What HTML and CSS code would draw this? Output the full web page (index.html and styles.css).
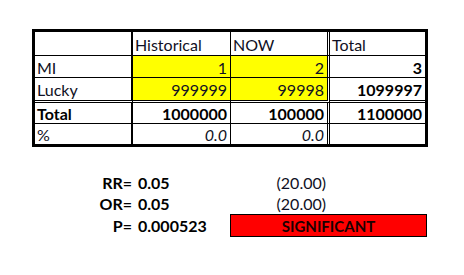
FILE: index.html
```html
<!DOCTYPE html>
<html>
<head>
<meta charset="utf-8">
<link rel="stylesheet" href="styles.css">
</head>
<body>
<div class="page">
  <div class="sheet">
    <div class="c c1 rh"></div>
    <div class="c c2 rh">Historical</div>
    <div class="c c3 rh">NOW</div>
    <div class="c c4 rh">Total</div>

    <div class="c c1 rm">MI</div>
    <div class="c c2 rm num yel">1</div>
    <div class="c c3 rm num yel">2</div>
    <div class="c c4 rm num b">3</div>

    <div class="c c1 rl">Lucky</div>
    <div class="c c2 rl num yel">999999</div>
    <div class="c c3 rl num yel">99998</div>
    <div class="c c4 rl num b">1099997</div>

    <div class="c c1 rt b">Total</div>
    <div class="c c2 rt num b">1000000</div>
    <div class="c c3 rt num b">100000</div>
    <div class="c c4 rt num b">1100000</div>

    <div class="c c1 rp">%</div>
    <div class="c c2 rp num i">0.0</div>
    <div class="c c3 rp num i">0.0</div>
    <div class="c c4 rp"></div>
  </div>

  <div class="stats">
    <div class="s lbl b">RR=</div>
    <div class="s val b">0.05</div>
    <div class="s num">(20.00)</div>
    <div class="s"></div>

    <div class="s lbl b">OR=</div>
    <div class="s val b">0.05</div>
    <div class="s num">(20.00)</div>
    <div class="s"></div>

    <div class="s lbl b">P=</div>
    <div class="s val b">0.000523</div>
    <div class="sig">SIGNIFICANT</div>
  </div>
</div>
</body>
</html>
```
FILE: styles.css
```css
html, body {
  margin: 0;
  padding: 0;
  background: #ffffff;
}
body {
  font-family: Lato, "Open Sans", "Liberation Sans", sans-serif;
  font-size: 16px;
  color: #101024;
}
.page {
  padding: 29px 0 0 32px;
}
.sheet {
  display: grid;
  grid-template-columns: 98px 98px 99px 95px;
  grid-template-rows: 24px 22px 25px 21px 20px;
  width: max-content;
  border: 3px solid #000;
}
.c {
  box-sizing: border-box;
  display: flex;
  align-items: center;
  padding: 1px 3px 0 2px;
  background-clip: padding-box;
  white-space: nowrap;
}
.c1 { border-right: 2px solid #000; }
.c2 { border-right: 1px solid #000; }
.c3 { border-right: 3px double #000; }
.rh, .rm, .rt { border-bottom: 1px solid #000; }
.rl { border-bottom: 3px double #000; }
.num { justify-content: flex-end; }
.yel { background-color: #ffff00; }
.b { font-weight: 700; color: #000; }
.i { font-style: italic; }

.stats {
  margin: 25px 0 0 3px;
  display: grid;
  grid-template-columns: 98px 97px 99px 98px;
  grid-template-rows: 21px 21px 23px;
  width: max-content;
}
.s {
  display: flex;
  align-items: center;
  white-space: nowrap;
}
.lbl { justify-content: flex-end; padding-right: 1px; }
.val { padding-left: 5px; }
.s.num { justify-content: flex-end; padding-right: 3px; }
.sig {
  grid-column: 3 / span 2;
  box-sizing: border-box;
  background: #ff0000;
  border: 1px solid #000;
  display: flex;
  align-items: center;
  justify-content: center;
  font-weight: 700;
  color: #1a0000;
  font-size: 15px;
}
```
